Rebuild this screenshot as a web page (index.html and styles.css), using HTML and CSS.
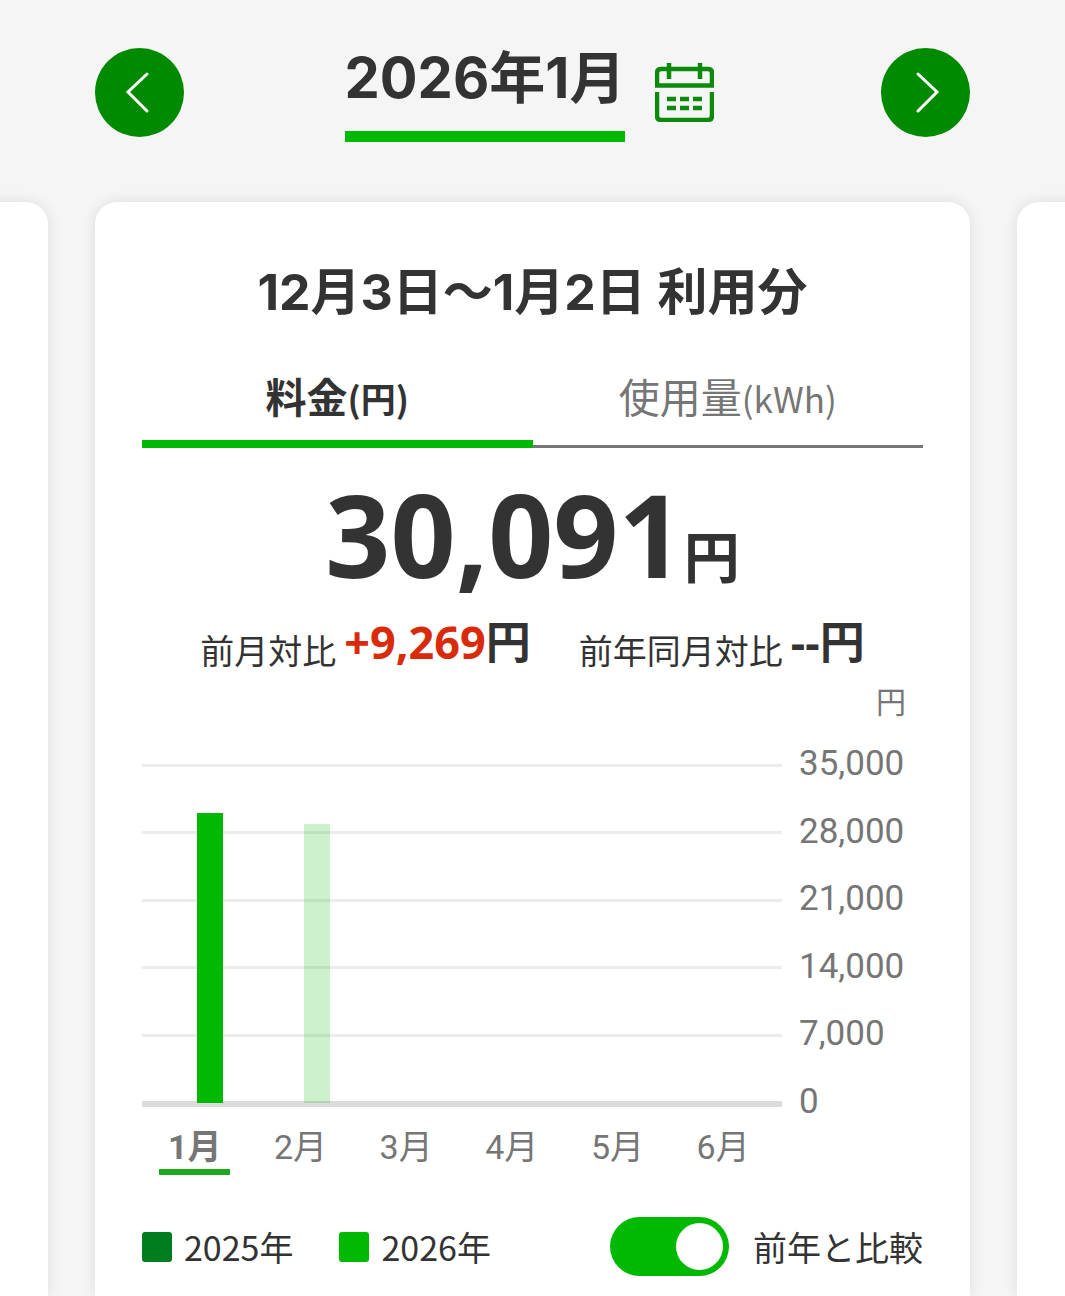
FILE: index.html
```html
<!DOCTYPE html>
<html lang="ja">
<head>
  <meta charset="UTF-8" />
  <meta name="viewport" content="width=device-width, initial-scale=1.0"/>
  <title>電気料金</title>
  <link rel="stylesheet" href="styles.css">
</head>
<body>
  <!-- Month switcher -->
  <header class="month-nav">
    <button class="arrow-btn" type="button" aria-label="前の月">
      <svg viewBox="0 0 89 89"><path d="M52 26 L33 44 L52 63"/></svg>
    </button>
    <div class="month-picker">
      <h1 class="month-title">2026年1月</h1>
      <button class="calendar-btn" type="button" aria-label="カレンダー">
        <svg viewBox="0 0 59 59">
          <path d="M2 22.500 V10 Q2 6 6 6 H53 Q57 6 57 10 V22.500 Z"/>
          <path d="M2 29 V53 Q2 57 6 57 H53 Q57 57 57 53 V29"/>
          <path d="M14 0 V16 M45 0 V16"/>
          <path d="M12 36 H21 M25 36 H34 M38 36 H47 M12 45 H21 M25 45 H34 M38 45 H47"/>
        </svg>
      </button>
    </div>
    <button class="arrow-btn" type="button" aria-label="次の月">
      <svg viewBox="0 0 89 89"><path d="M37 26 L56 44 L37 63"/></svg>
    </button>
  </header>

  <!-- Cards -->
  <main class="carousel">
    <div class="card"></div>
    <section class="card">
      <h2 class="period">12月3日～1月2日 利用分</h2>

      <div class="tabs" role="tablist">
        <button class="tab active" type="button" role="tab" aria-selected="true">料金<span class="small">(円)</span></button>
        <button class="tab" type="button" role="tab" aria-selected="false">使用量<span class="small">(kWh)</span></button>
      </div>

      <p class="total">30,091<span class="yen">円</span></p>

      <div class="compare">
        <p class="compare-item">前月対比<strong><span class="up">+9,269</span>円</strong></p>
        <p class="compare-item">前年同月対比<strong>--円</strong></p>
      </div>

      <p class="unit">円</p>
      <div class="chart">
        <div class="plot">
          <div class="lines">
            <i></i><i></i><i></i><i></i><i></i><i></i>
          </div>
          <div class="bars">
            <div class="bar-slot"><span class="bar" style="height: 85.5%"></span></div>
            <div class="bar-slot"><span class="bar forecast" style="height: 82.2%"></span></div>
            <div class="bar-slot"></div>
            <div class="bar-slot"></div>
            <div class="bar-slot"></div>
            <div class="bar-slot"></div>
          </div>
        </div>
        <div class="scale">
          <span>35,000</span>
          <span>28,000</span>
          <span>21,000</span>
          <span>14,000</span>
          <span>7,000</span>
          <span>0</span>
        </div>
        <div class="months">
          <button class="month current" type="button">1月</button>
          <button class="month" type="button">2月</button>
          <button class="month" type="button">3月</button>
          <button class="month" type="button">4月</button>
          <button class="month" type="button">5月</button>
          <button class="month" type="button">6月</button>
        </div>
      </div>

      <div class="legend">
        <span class="legend-item"><i class="swatch last-year"></i>2025年</span>
        <span class="legend-item"><i class="swatch"></i>2026年</span>
        <label class="switch-label"><input class="switch" type="checkbox" checked>前年と比較</label>
      </div>
    </section>
    <div class="card"></div>
  </main>
</body>
</html>
```

FILE: styles.css
```css
/* RESET & BASE */
* {
  margin: 0; padding: 0;
  box-sizing: border-box;
}
body {
  display: flex; flex-direction: column;
  min-height: 100vh;
  background: #f5f5f5;
  color: #333;
  font-family: "Noto Sans CJK JP", sans-serif;
  font-size: 34px;
  overflow-x: hidden;
}
button {
  border: 0;
  background: none;
  color: inherit;
  font: inherit;
  cursor: pointer;
}
svg { display: block; width: 100%; fill: none; }

/* MONTH SWITCHER */
.month-nav {
  display: flex; align-items: center;
  justify-content: space-between;
  padding: 43px 95px 60px;
}
.arrow-btn {
  width: 89px; height: 89px;
  border-radius: 50%;
  background: #008a00;
}
.arrow-btn svg {
  stroke: #fff; stroke-width: 3;
  stroke-linecap: round;
}
.month-picker {
  display: flex; align-items: center;
  gap: 30px;
  padding-right: 6px;
}
.month-title {
  padding-bottom: 18px;
  border-bottom: 11px solid #00b900;
  font-family: Inter, "Noto Sans CJK JP", sans-serif;
  font-size: 56px; font-weight: 700;
  line-height: 70px;
}
.calendar-btn { width: 59px; height: 59px; }
.calendar-btn svg { stroke: #0c8a0c; stroke-width: 4.5; }

/* CARDS */
.carousel {
  flex: 1;
  display: flex; justify-content: center;
  gap: 47px;
  overflow: hidden;
  margin-top: -20px;
  padding-top: 20px;
}
.card {
  flex: 0 0 calc(100% - 190px);
  padding: 55px 47px 19px;
  border-radius: 22px 22px 0 0;
  background: #fff;
  box-shadow: 0 0 14px rgba(0,0,0,0.1);
}
.period {
  font-family: Inter, "Noto Sans CJK JP", sans-serif;
  font-size: 50px; font-weight: 700;
  line-height: 70px;
  text-align: center;
}

/* TABS */
.tabs { display: flex; align-items: flex-end; margin-top: 38px; }
.tab {
  flex: 1;
  padding-bottom: 17px;
  border-bottom: 3px solid #767676;
  color: #767676;
  font-size: 41px;
  line-height: 60px;
}
.tab.active {
  padding-bottom: 12px;
  border-bottom: 8px solid #00b900;
  color: #333;
  font-weight: 700;
}
.small { font-size: 35px; }

/* TOTAL */
.total {
  margin-top: 26px;
  font-family: "Noto Sans", "Noto Sans CJK JP", sans-serif;
  font-size: 114px; font-weight: 700;
  line-height: 120px;
  text-align: center;
}
.yen { font-size: 56px; line-height: 1; }
.compare {
  display: flex; justify-content: center;
  gap: 48px;
  margin-top: 18px;
}
.compare-item {
  display: flex; align-items: flex-end;
  gap: 8px;
  line-height: 44px;
}
.compare-item strong {
  font-family: "Noto Sans", "Noto Sans CJK JP", sans-serif;
  font-size: 45px;
  line-height: 60px;
}
.up { color: #d92b0a; }

/* CHART */
.unit {
  margin-top: 8px;
  padding-right: 17px;
  color: #767676;
  font-size: 30px;
  line-height: 40px;
  text-align: right;
}
.chart {
  display: grid;
  grid-template-columns: 1fr 124px;
  column-gap: 17px;
  margin-top: 44px;
  color: #767676;
  font-family: Roboto, "Noto Sans CJK JP", sans-serif;
  line-height: 34px;
}
.plot { display: grid; height: 343px; }
.lines, .bars { grid-area: 1 / 1; }
.lines {
  display: flex; flex-direction: column;
  justify-content: space-between;
}
.lines i { height: 3px; background: #ececec; }
.lines i:last-child { height: 6px; background: #dcdcdc; }
.bars {
  display: grid;
  grid-template-columns: repeat(6, 1fr);
  padding-bottom: 4px;
}
.bar-slot {
  display: flex; align-items: flex-end;
  padding-left: calc(50% + 2px);
}
.bar { width: 26px; background: #00b900; }
.bar.forecast { opacity: 0.2; }
.scale {
  display: flex; flex-direction: column;
  justify-content: space-between;
  margin: -17px 0 -12px;
  font-size: 35px;
}
.months {
  display: grid;
  grid-template-columns: repeat(6, 1fr);
  justify-items: center;
  margin-top: 20px;
  padding-right: 6px;
}
.month {
  width: 71px;
  padding-bottom: 2px;
  border-bottom: 6px solid transparent;
  border-radius: 1px;
  line-height: 40px;
}
.month.current {
  border-color: #1ca81c;
  font-weight: 700;
}

/* LEGEND */
.legend {
  display: flex; align-items: center;
  gap: 46px;
  margin-top: 42px;
}
.legend-item, .switch-label { display: flex; align-items: center; }
.legend-item { gap: 12px; }
.swatch {
  width: 30px; height: 30px;
  border-radius: 3px;
  background: #00b900;
}
.swatch.last-year { background: #007d1e; }
.switch-label {
  gap: 24px;
  margin-left: auto;
}
.switch {
  display: flex; align-items: center;
  width: 119px; height: 59px;
  padding: 6px;
  border-radius: 30px;
  background: #aaa;
  appearance: none;
}
.switch::after {
  content: "";
  width: 47px; height: 47px;
  border-radius: 50%;
  background: #fff;
}
.switch:checked {
  justify-content: flex-end;
  background: #00b900;
}
```
